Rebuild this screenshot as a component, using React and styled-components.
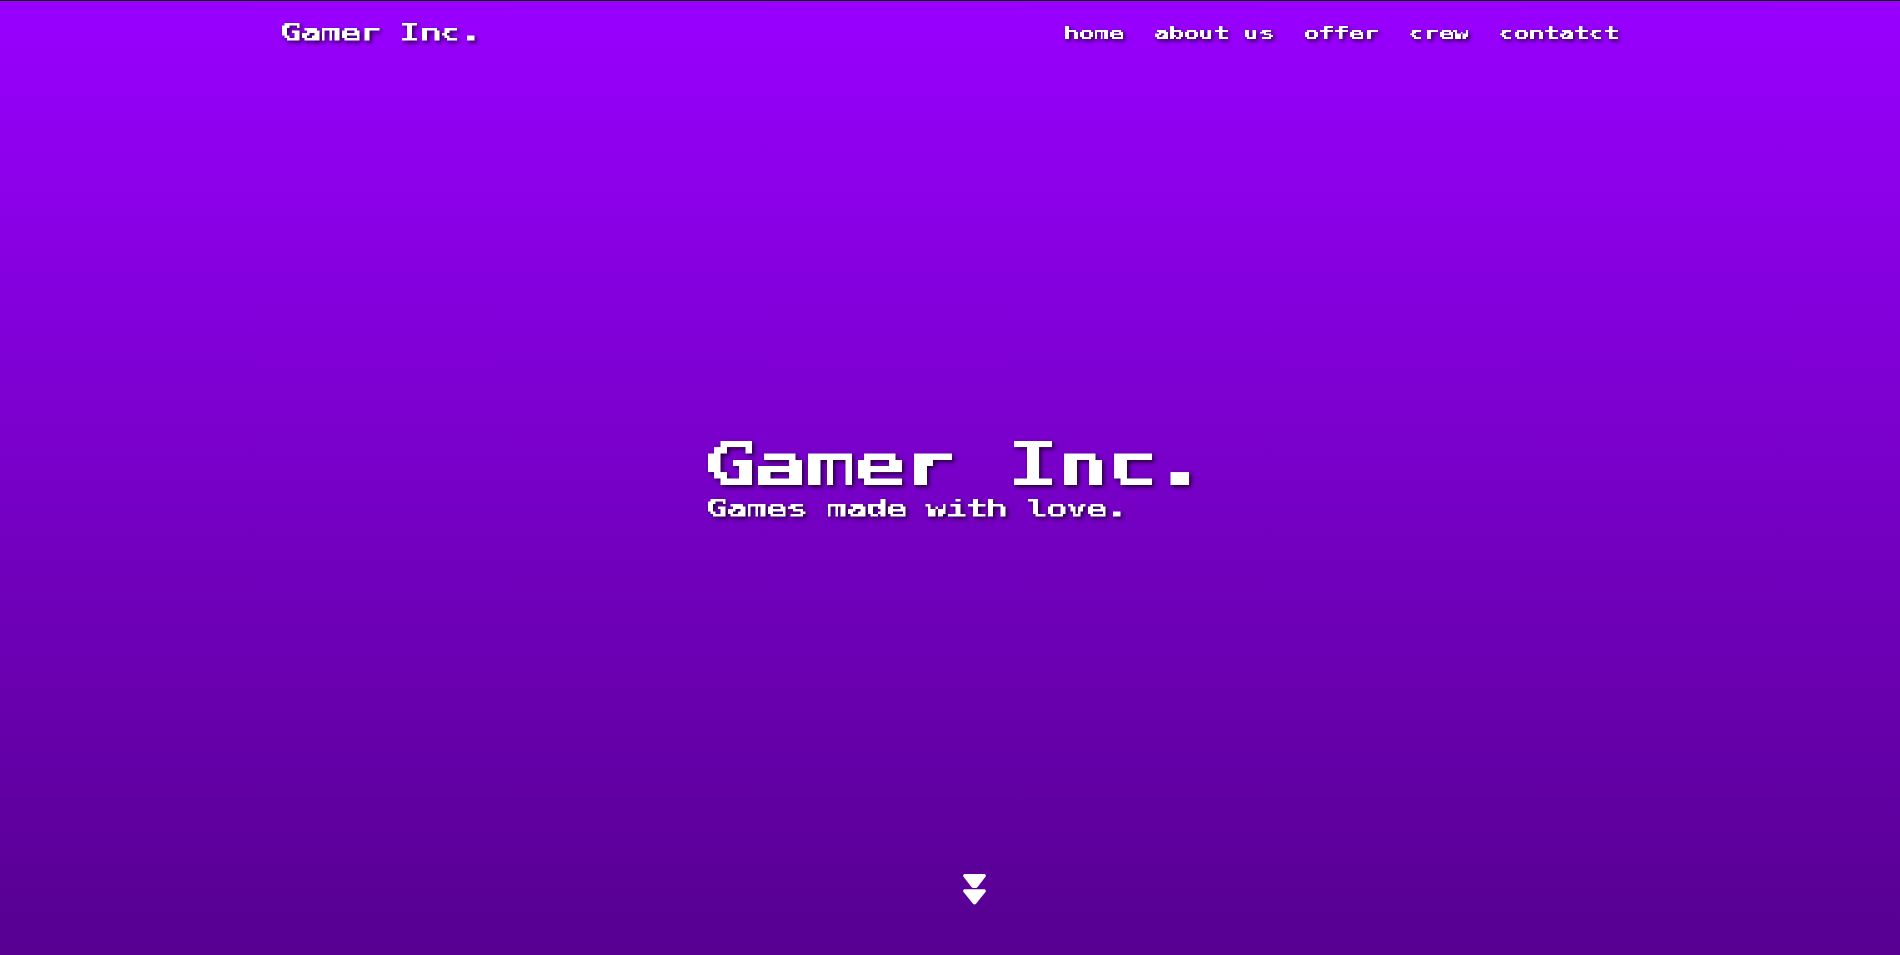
import React from 'react';
import styled, { createGlobalStyle } from 'styled-components';

const GlobalStyle = createGlobalStyle`
  * { box-sizing: border-box; }
  html, body { margin: 0; background: #0b0014; }
  body { overflow: hidden; color: #fff; font-family: "DejaVu Sans Mono", monospace; }
`;

const Page = styled.div`
  height: 100vh;
  display: flex;
  flex-direction: column;
  border-top: 1px solid #08000f;
  background: linear-gradient(to bottom, #9900ff, #560090);
`;

const Header = styled.header`
  width: 1340px;
  margin: 0 auto;
  padding: 22px 0 0 2px;
  display: flex;
  justify-content: space-between;
  align-items: flex-start;
`;

const Nav = styled.nav`
  display: flex;
  gap: 30px;
  padding-top: 3px;
`;

const NavLink = styled.a`
  color: inherit;
  text-decoration: none;
`;

/* Letters are laid out on an 8 x 8 grid of square blocks, then scaled to size. */
const Cell = styled.span`
  display: block;
  width: ${(p) => p.$size * p.$chars}px;
  height: ${(p) => p.$size}px;
  filter: drop-shadow(2px 2px 2px rgba(0, 0, 0, 0.75));
`;

const Scaler = styled.span`
  display: block;
  width: ${(p) => p.$chars * p.$unit * 8}px;
  height: ${(p) => p.$unit * 8}px;
  transform: scale(${(p) => p.$size / (p.$unit * 8)});
  transform-origin: 0 0;
  will-change: transform;
`;

const Blocks = styled.span`
  display: block;
  width: 100%;
  height: 100%;
  filter: url(#blocks-${(p) => p.$unit});
`;

const Glyphs = styled.span`
  display: block;
  width: max-content;
  margin-left: ${(p) => p.$unit * -0.6}px;
  white-space: pre;
  font-size: ${(p) => p.$unit * 9.6}px;
  line-height: ${(p) => p.$unit * 7.66}px;
  font-weight: 700;
  letter-spacing: -0.0273em;
  transform: scaleX(1.45);
  transform-origin: 0 0;
`;

const Hero = styled.main`
  width: 500px;
  margin: 398px auto 0 708px;
  display: flex;
  flex-direction: column;
  gap: 8px;
`;

const Title = styled.h1`
  margin: 0;
  font-size: inherit;
`;

const Tagline = styled.p`
  margin: 0;
`;

const ScrollHint = styled.svg`
  display: block;
  width: 23px;
  height: 32px;
  margin: auto 0 49px 963px;
  fill: #fff;
`;

const FilterDefs = styled.svg`
  display: block;
  width: 0;
  height: 0;
`;

function BlockFilter({ unit }) {
  return (
    <filter id={`blocks-${unit}`} filterUnits="userSpaceOnUse" primitiveUnits="userSpaceOnUse" x="0" y="0" width={unit * 168} height={unit * 9}>
      <feFlood x={unit / 2} y={unit / 2} width="1" height="1" floodColor="#fff" result="dot" />
      <feOffset in="dot" dx="0" dy="0" x="0" y="0" width={unit} height={unit} />
      <feTile result="grid" />
      <feComposite in="SourceGraphic" in2="grid" operator="in" />
      <feComponentTransfer>
        <feFuncA type="discrete" tableValues="0 1" />
      </feComponentTransfer>
      <feMorphology operator="dilate" radius={unit / 2 - 1} result="core" />
      <feOffset in="core" dx="-1" dy="0" result="left" />
      <feMerge result="wide">
        <feMergeNode in="core" />
        <feMergeNode in="left" />
      </feMerge>
      <feOffset in="wide" dx="0" dy="-1" result="up" />
      <feMerge>
        <feMergeNode in="wide" />
        <feMergeNode in="up" />
      </feMerge>
    </filter>
  );
}

function BlockText({ size, unit = 6, children }) {
  return (
    <Cell $size={size} $chars={children.length}>
      <Scaler $size={size} $unit={unit} $chars={children.length}>
        <Blocks $unit={unit}>
          <Glyphs $unit={unit}>{children}</Glyphs>
        </Blocks>
      </Scaler>
    </Cell>
  );
}

const links = ['home', 'about us', 'offer', 'crew', 'contatct'];

export default function App() {
  return (
    <>
      <GlobalStyle />
      <Page>
        <FilterDefs aria-hidden="true">
          <BlockFilter unit={6} />
          <BlockFilter unit={12} />
        </FilterDefs>
        <Header>
          <BlockText size={20}>Gamer Inc.</BlockText>
          <Nav>
            {links.map((label) => (
              <NavLink key={label}>
                <BlockText size={15}>{label}</BlockText>
              </NavLink>
            ))}
          </Nav>
        </Header>
        <Hero>
          <Title>
            <BlockText size={50} unit={12}>Gamer Inc.</BlockText>
          </Title>
          <Tagline>
            <BlockText size={20}>Games made with love.</BlockText>
          </Tagline>
        </Hero>
        <ScrollHint viewBox="0 0 23 32">
          <path d="M1.3 0H21.7Q23.6 1 22.5 2.8L14.4 13.2Q13.8 14 12.8 14H10.2Q9.2 14 8.6 13.2L.5 2.8Q-.6 1 1.3 0Z" />
          <path d="M1.3 15.2H21.7Q23.6 16.2 22.5 18L13 29.8Q11.5 31.4 10 29.8L.5 18Q-.6 16.2 1.3 15.2Z" />
        </ScrollHint>
      </Page>
    </>
  );
}
